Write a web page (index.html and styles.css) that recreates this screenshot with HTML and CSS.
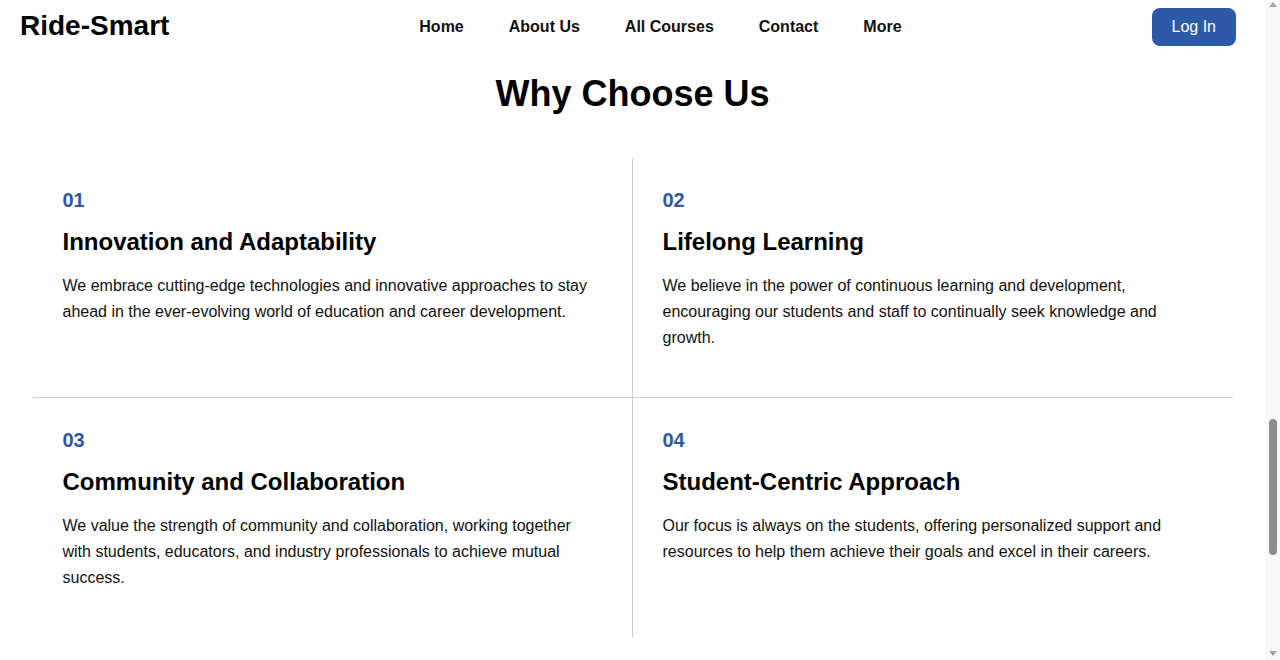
FILE: index.html
```html
<!DOCTYPE html>
<html lang="en">
<head>
<meta charset="utf-8">
<title>Ride-Smart - Why Choose Us</title>
<link rel="stylesheet" href="styles.css">
</head>
<body>
<div class="page">
  <header class="site-header">
    <div class="logo">Ride-Smart</div>
    <nav class="main-nav">
      <a href="#">Home</a>
      <a href="#">About Us</a>
      <a href="#">All Courses</a>
      <a href="#">Contact</a>
      <a href="#">More</a>
    </nav>
    <a class="login-btn" href="#">Log In</a>
  </header>
  <main>
    <section class="why">
      <h2 class="why-title">Why Choose Us</h2>
      <div class="why-grid">
        <div class="why-cell">
          <div class="why-num">01</div>
          <h3 class="why-head">Innovation and Adaptability</h3>
          <p class="why-text">We embrace cutting-edge technologies and innovative approaches to stay ahead in the ever-evolving world of education and career development.</p>
        </div>
        <div class="why-cell">
          <div class="why-num">02</div>
          <h3 class="why-head">Lifelong Learning</h3>
          <p class="why-text">We believe in the power of continuous learning and development, encouraging our students and staff to continually seek knowledge and growth.</p>
        </div>
        <div class="why-cell">
          <div class="why-num">03</div>
          <h3 class="why-head">Community and Collaboration</h3>
          <p class="why-text">We value the strength of community and collaboration, working together with students, educators, and industry professionals to achieve mutual success.</p>
        </div>
        <div class="why-cell">
          <div class="why-num">04</div>
          <h3 class="why-head">Student-Centric Approach</h3>
          <p class="why-text">Our focus is always on the students, offering personalized support and resources to help them achieve their goals and excel in their careers.</p>
        </div>
      </div>
    </section>
  </main>
</div>
<div class="fake-scrollbar" aria-hidden="true">
  <span class="sb-arrow sb-up"></span>
  <span class="sb-thumb"></span>
  <span class="sb-arrow sb-down"></span>
</div>
</body>
</html>
```

FILE: styles.css
```css
body {
  margin: 0;
  font-family: "Liberation Sans", Arial, sans-serif;
  color: #000;
  background: #fff;
}
.page {
  margin-right: 15px;
}
.fake-scrollbar {
  position: fixed;
  top: 0;
  right: 0;
  width: 15px;
  height: 100%;
  background: #f9f9f9;
}
.sb-arrow {
  position: absolute;
  left: 4px;
  width: 0;
  height: 0;
  border-left: 4px solid transparent;
  border-right: 4px solid transparent;
}
.sb-up {
  top: 2px;
  border-bottom: 5px solid #a3a3a3;
}
.sb-down {
  bottom: 4px;
  border-top: 5px solid #a3a3a3;
}
.sb-thumb {
  position: absolute;
  left: 4px;
  top: 419px;
  width: 8px;
  height: 136px;
  border-radius: 4px;
  background: #8e8e8e;
}
.site-header {
  height: 54px;
  display: flex;
  align-items: center;
  justify-content: space-between;
  padding: 0 29px 0 20px;
}
.logo {
  font-size: 28px;
  font-weight: 700;
  line-height: 1;
  margin-top: -2px;
}
.main-nav {
  display: flex;
  gap: 45px;
}
.main-nav a {
  font-size: 16px;
  font-weight: 700;
  color: #111;
  text-decoration: none;
}
.login-btn {
  display: block;
  background: #2c5aa8;
  color: #fff;
  text-decoration: none;
  font-size: 16px;
  line-height: 18px;
  padding: 10px 20px;
  border-radius: 8px;
}
.why {
  padding-top: 18px;
}
.why-title {
  margin: 0 0 43px;
  text-align: center;
  font-size: 36px;
  line-height: 1.2;
  font-weight: 700;
}
.why-grid {
  width: 1200px;
  margin: 0 auto;
  display: grid;
  grid-template-columns: 1fr 1fr;
}
.why-cell {
  padding: 30px;
}
.why-cell:nth-child(odd) {
  border-right: 1px solid #c8ccd6;
}
.why-cell:nth-child(-n+2) {
  border-bottom: 1px solid #c8ccd6;
}
.why-num {
  font-size: 20px;
  line-height: 25px;
  font-weight: 700;
  color: #2c5aa0;
  margin-bottom: 15px;
}
.why-head {
  margin: 0 0 16px;
  font-size: 24px;
  line-height: 1.2;
  font-weight: 700;
}
.why-text {
  margin: 0 0 16px;
  font-size: 16px;
  line-height: 26px;
  color: #111;
}
```
